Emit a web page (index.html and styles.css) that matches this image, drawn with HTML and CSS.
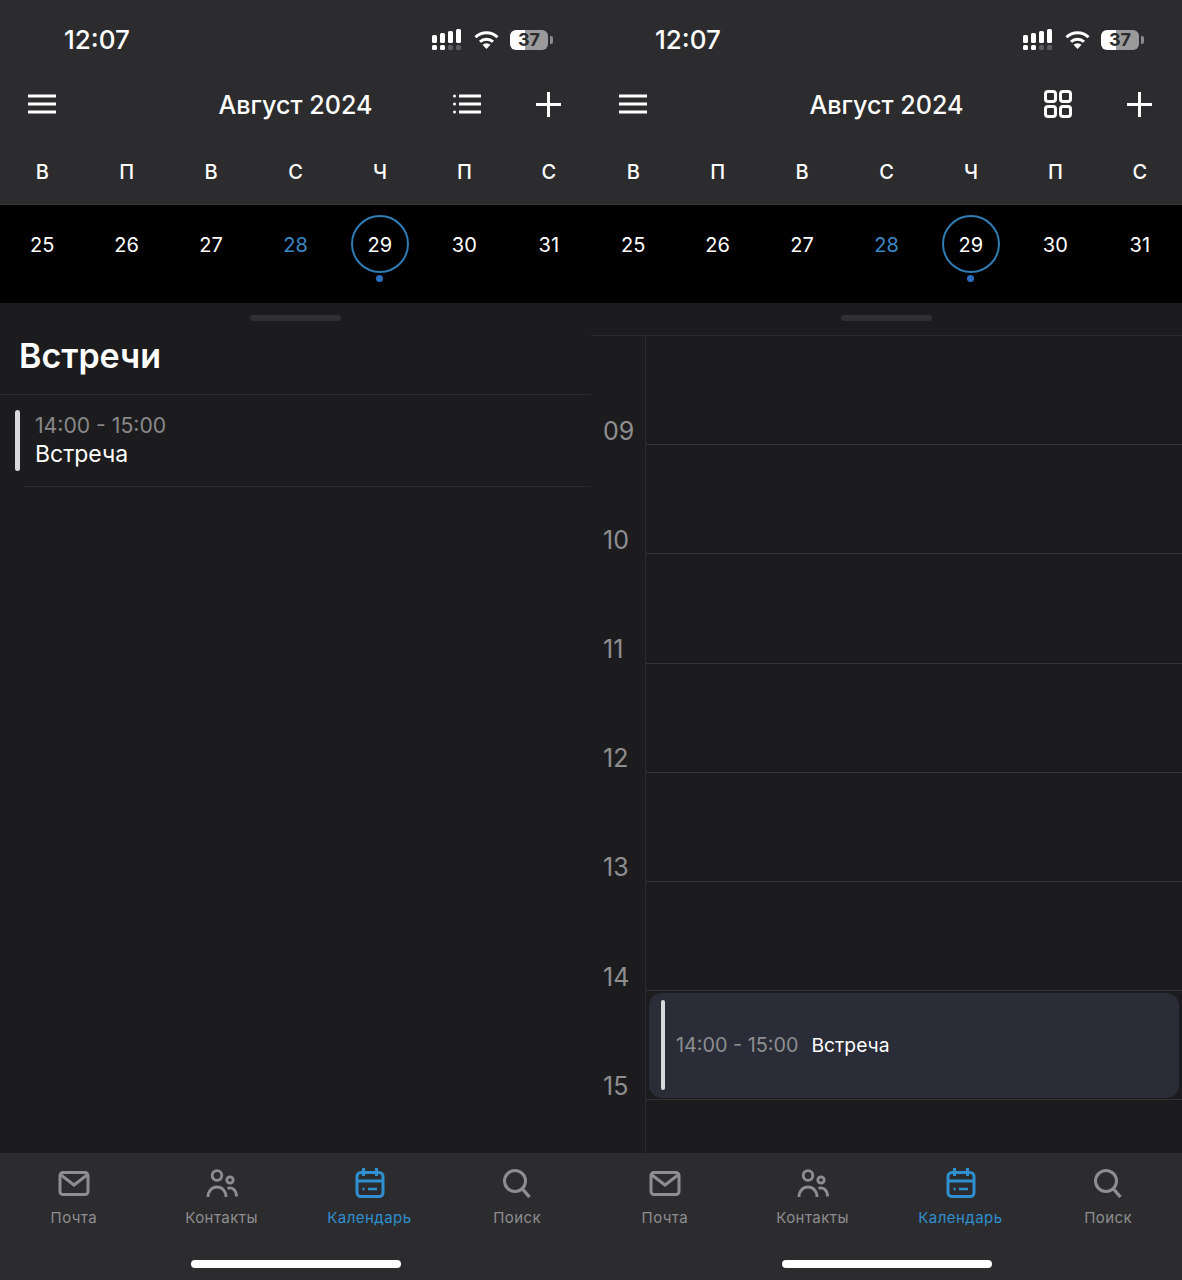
FILE: index.html
```html
<!DOCTYPE html>
<html lang="ru">
<head>
<meta charset="utf-8">
<title>Календарь</title>
<link rel="stylesheet" href="styles.css">
</head>
<body>
<div class="screens">

<section class="phone">
  <header class="top">
    <div class="status">
      <span class="clock">12:07</span>
      <div class="status-icons">
        <svg class="signal" width="31" height="21" viewBox="0 0 31 21"><g fill="#fff"><rect x="0" y="6" width="5" height="8" rx="1.5"/><rect x="8" y="4" width="5" height="10" rx="1.5"/><rect x="16" y="2" width="5" height="12" rx="1.5"/><rect x="24" y="0" width="5" height="14" rx="1.5"/><rect x="0" y="16" width="5" height="5" rx="1.5"/><rect x="8" y="16" width="5" height="5" rx="1.5"/></g><g fill="#5c5c5e"><rect x="16" y="16" width="5" height="5" rx="1.5"/><rect x="24" y="16" width="5" height="5" rx="1.5"/></g></svg>
        <svg class="wifi" width="25" height="19" viewBox="0 0 25 19"><g fill="none" stroke="#fff" stroke-width="3"><path d="M1.5 7.2a15.6 15.6 0 0 1 22 0"/><path d="M6 11.8a9.3 9.3 0 0 1 13 0"/></g><path d="M12.5 19l-4-4.2a5.7 5.7 0 0 1 8 0z" fill="#fff"/></svg>
        <div class="battery"><span class="battery-level">37</span><i class="battery-nub"></i></div>
      </div>
    </div>
    <nav class="nav">
      <svg class="icon-menu" width="28" height="20" viewBox="0 0 28 20"><path d="M0 2h28M0 10h28M0 18h28" stroke="#fff" stroke-width="3"/></svg>
      <h1 class="month">Август 2024</h1>
      <svg class="icon-view" width="28" height="20" viewBox="0 0 28 20"><g fill="#fff"><circle cx="1.5" cy="2" r="1.5"/><circle cx="1.5" cy="10" r="1.5"/><circle cx="1.5" cy="18" r="1.5"/></g><path d="M6 2h22M6 10h22M6 18h22" stroke="#fff" stroke-width="3"/></svg>
      <svg class="icon-plus" width="25" height="25" viewBox="0 0 25 25"><path d="M12.5 0v25M0 12.5h25" stroke="#fff" stroke-width="3"/></svg>
    </nav>
    <div class="weekdays"><span>В</span><span>П</span><span>В</span><span>С</span><span>Ч</span><span>П</span><span>С</span></div>
  </header>
  <div class="dates">
    <span class="date">25</span><span class="date">26</span><span class="date">27</span><span class="date date-today">28</span><span class="date date-selected">29</span><span class="date">30</span><span class="date">31</span>
  </div>
  <main class="sheet">
    <div class="handle"></div>
    <h2 class="list-title">Встречи</h2>
    <article class="list-event">
      <i class="event-bar"></i>
      <div class="list-event-text">
        <div class="list-event-time">14:00 - 15:00</div>
        <div class="list-event-name">Встреча</div>
      </div>
    </article>
  </main>
  <footer class="tabbar">
    <div class="tabs">
      <div class="tab"><svg width="32" height="30" viewBox="0 0 32 30"><rect x="2" y="4.500" width="28" height="22" rx="3" fill="none" stroke="currentColor" stroke-width="3"/><path d="M3 7l13 10L29 7" fill="none" stroke="currentColor" stroke-width="3"/></svg><span>Почта</span></div>
      <div class="tab"><svg width="32" height="30" viewBox="0 0 32 30"><g fill="none" stroke="currentColor" stroke-width="2.800"><circle cx="11" cy="7.500" r="4.800"/><circle cx="24" cy="12" r="3.200"/><path d="M2 29c0-6 4-10 9-10s9 4 9 10"/><path d="M21.500 20.500c4-2 9 1 9 8"/></g></svg><span>Контакты</span></div>
      <div class="tab tab-active"><svg width="32" height="30" viewBox="0 0 32 30"><rect x="4" y="4.500" width="26" height="24" rx="4" fill="none" stroke="currentColor" stroke-width="3"/><path d="M10.500 0v8M23.500 0v8M4 13h26" fill="none" stroke="currentColor" stroke-width="3"/><path d="M9.500 21h2M15 21h9" fill="none" stroke="currentColor" stroke-width="2.500"/></svg><span>Календарь</span></div>
      <div class="tab"><svg width="32" height="30" viewBox="0 0 32 30"><circle cx="14" cy="13" r="10.500" fill="none" stroke="currentColor" stroke-width="3"/><path d="M21.500 21l7 8" fill="none" stroke="currentColor" stroke-width="3.400"/></svg><span>Поиск</span></div>
    </div>
    <div class="home-bar"></div>
  </footer>
</section>

<section class="phone">
  <header class="top">
    <div class="status">
      <span class="clock">12:07</span>
      <div class="status-icons">
        <svg class="signal" width="31" height="21" viewBox="0 0 31 21"><g fill="#fff"><rect x="0" y="6" width="5" height="8" rx="1.5"/><rect x="8" y="4" width="5" height="10" rx="1.5"/><rect x="16" y="2" width="5" height="12" rx="1.5"/><rect x="24" y="0" width="5" height="14" rx="1.5"/><rect x="0" y="16" width="5" height="5" rx="1.5"/><rect x="8" y="16" width="5" height="5" rx="1.5"/></g><g fill="#5c5c5e"><rect x="16" y="16" width="5" height="5" rx="1.5"/><rect x="24" y="16" width="5" height="5" rx="1.5"/></g></svg>
        <svg class="wifi" width="25" height="19" viewBox="0 0 25 19"><g fill="none" stroke="#fff" stroke-width="3"><path d="M1.5 7.2a15.6 15.6 0 0 1 22 0"/><path d="M6 11.8a9.3 9.3 0 0 1 13 0"/></g><path d="M12.5 19l-4-4.2a5.7 5.7 0 0 1 8 0z" fill="#fff"/></svg>
        <div class="battery"><span class="battery-level">37</span><i class="battery-nub"></i></div>
      </div>
    </div>
    <nav class="nav">
      <svg class="icon-menu" width="28" height="20" viewBox="0 0 28 20"><path d="M0 2h28M0 10h28M0 18h28" stroke="#fff" stroke-width="3"/></svg>
      <h1 class="month">Август 2024</h1>
      <svg class="icon-view" width="28" height="28" viewBox="0 0 28 28"><g fill="none" stroke="#fff" stroke-width="3"><rect x="1.500" y="1.500" width="10" height="10" rx="2.500"/><rect x="16.500" y="1.500" width="10" height="10" rx="2.500"/><rect x="1.500" y="16.500" width="10" height="10" rx="2.500"/><rect x="16.500" y="16.500" width="10" height="10" rx="2.500"/></g></svg>
      <svg class="icon-plus" width="25" height="25" viewBox="0 0 25 25"><path d="M12.5 0v25M0 12.5h25" stroke="#fff" stroke-width="3"/></svg>
    </nav>
    <div class="weekdays"><span>В</span><span>П</span><span>В</span><span>С</span><span>Ч</span><span>П</span><span>С</span></div>
  </header>
  <div class="dates">
    <span class="date">25</span><span class="date">26</span><span class="date">27</span><span class="date date-today">28</span><span class="date date-selected">29</span><span class="date">30</span><span class="date">31</span>
  </div>
  <main class="sheet">
    <div class="handle"></div>
    <div class="hours">
      <div class="hour"><span class="hour-label">09</span><div class="slot"></div></div>
      <div class="hour"><span class="hour-label">10</span><div class="slot"></div></div>
      <div class="hour"><span class="hour-label">11</span><div class="slot"></div></div>
      <div class="hour"><span class="hour-label">12</span><div class="slot"></div></div>
      <div class="hour"><span class="hour-label">13</span><div class="slot"></div></div>
      <div class="hour"><span class="hour-label">14</span><div class="slot"></div></div>
      <div class="hour"><span class="hour-label">15</span>
        <div class="slot slot-busy">
          <article class="day-event">
            <i class="event-bar day-event-bar"></i>
            <span class="day-event-time">14:00 - 15:00</span>
            <span class="day-event-name">Встреча</span>
          </article>
        </div>
      </div>
      <div class="hour hour-rest"><span class="hour-label"></span></div>
    </div>
  </main>
  <footer class="tabbar">
    <div class="tabs">
      <div class="tab"><svg width="32" height="30" viewBox="0 0 32 30"><rect x="2" y="4.500" width="28" height="22" rx="3" fill="none" stroke="currentColor" stroke-width="3"/><path d="M3 7l13 10L29 7" fill="none" stroke="currentColor" stroke-width="3"/></svg><span>Почта</span></div>
      <div class="tab"><svg width="32" height="30" viewBox="0 0 32 30"><g fill="none" stroke="currentColor" stroke-width="2.800"><circle cx="11" cy="7.500" r="4.800"/><circle cx="24" cy="12" r="3.200"/><path d="M2 29c0-6 4-10 9-10s9 4 9 10"/><path d="M21.500 20.500c4-2 9 1 9 8"/></g></svg><span>Контакты</span></div>
      <div class="tab tab-active"><svg width="32" height="30" viewBox="0 0 32 30"><rect x="4" y="4.500" width="26" height="24" rx="4" fill="none" stroke="currentColor" stroke-width="3"/><path d="M10.500 0v8M23.500 0v8M4 13h26" fill="none" stroke="currentColor" stroke-width="3"/><path d="M9.500 21h2M15 21h9" fill="none" stroke="currentColor" stroke-width="2.500"/></svg><span>Календарь</span></div>
      <div class="tab"><svg width="32" height="30" viewBox="0 0 32 30"><circle cx="14" cy="13" r="10.500" fill="none" stroke="currentColor" stroke-width="3"/><path d="M21.500 21l7 8" fill="none" stroke="currentColor" stroke-width="3.400"/></svg><span>Поиск</span></div>
    </div>
    <div class="home-bar"></div>
  </footer>
</section>

</div>
</body>
</html>
```
FILE: styles.css
```css
* { box-sizing: border-box; }
html, body { margin: 0; padding: 0; background: #1c1c1e; }
body { font-family: Inter, "Noto Sans", sans-serif; color: #fff; overflow: hidden; }
h1, h2 { margin: 0; }
i { display: block; }

.screens { display: grid; grid-template-columns: 591px 591px; width: 1182px; height: 1280px; }
.phone { display: flex; flex-direction: column; height: 1280px; min-width: 0; }

.top { height: 205px; background: #2c2c2e; border-bottom: 1px solid #363638; flex: none; }

.status { height: 72px; padding: 7px 43px 0 64px; display: flex; align-items: center; justify-content: space-between; }
.clock { font-size: 26px; font-weight: 500; line-height: 32px; }
.status-icons { display: flex; align-items: center; gap: 11px; }
.signal, .wifi { display: block; flex: none; }
.battery {
  position: relative; width: 38px; height: 20px; border-radius: 6px;
  background: linear-gradient(90deg, #fff 0 39%, #9a9a9a 39% 100%);
  display: flex; align-items: center; justify-content: center;
  color: #2c2c2e; font-size: 18px; font-weight: 700; line-height: 20px;
}
.battery-nub { position: absolute; left: 40px; top: 6px; width: 2.500px; height: 8px; border-radius: 0 2px 2px 0; background: #8c8c8c; }

.nav { height: 64px; display: grid; grid-template-columns: repeat(7, 1fr); align-items: center; justify-items: center; }
.nav svg { display: block; }
.icon-menu { grid-column: 1; }
.month { grid-column: 3 / 6; font-size: 25.100px; font-weight: 500; line-height: 32px; white-space: nowrap; padding-top: 2px; }
.icon-view { grid-column: 6; margin-left: 6px; }
.icon-plus { grid-column: 7; }

.weekdays { display: grid; grid-template-columns: repeat(7, 1fr); text-align: center; font-size: 20px; font-weight: 500; line-height: 24px; padding-top: 24px; }

.dates { height: 98px; background: #000; display: grid; grid-template-columns: repeat(7, 1fr); align-items: start; justify-items: center; flex: none; padding-top: 10px; }
.date { position: relative; width: 58px; height: 58px; display: flex; align-items: center; justify-content: center; font-size: 20px; padding-top: 2px; }
.date-today { color: #3a87c4; }
.date-selected { border: 2px solid #2f7cb3; border-radius: 50%; }
.date-selected::after { content: ""; position: absolute; left: 50%; top: 58px; width: 7px; height: 7px; margin-left: -3.500px; border-radius: 50%; background: #2a6fc0; }

.sheet { flex: 1; min-height: 0; background: #1c1c1e; display: flex; flex-direction: column; }
.handle { width: 91px; height: 6px; border-radius: 3px; background: #303032; margin: 12px auto 0; flex: none; }

.list-title { height: 74px; padding: 0 19px; font-size: 34px; font-weight: 600; line-height: 70px; border-bottom: 1px solid #2b2b2d; flex: none; }
.list-event { display: flex; gap: 15px; padding: 15px 0 0 15px; }
.event-bar { width: 5px; background: #d9d9db; border-radius: 3px; flex: none; }
.list-event .event-bar { height: 61px; }
.list-event-text { flex: 1; padding-bottom: 17px; border-bottom: 1px solid #2b2b2d; margin-left: -11px; padding-left: 11px; }
.list-event-time { font-size: 21.200px; line-height: 30px; color: #88888a; }
.list-event-name { font-size: 23px; line-height: 28px; padding-bottom: 1px; }

.hours { margin-top: 14px; flex: 1; min-height: 0; overflow: hidden; border-top: 1px solid #2b2b2d; display: flex; flex-direction: column; }
.hour { height: 109.200px; display: grid; grid-template-columns: 55px 1fr; flex: none; }
.hour-rest { flex: 1; height: auto; }
.hour-label { display: flex; align-items: flex-end; padding: 0 0 0.500px 12px; font-size: 25px; line-height: 28px; color: #8e8e90; border-right: 1px solid #2b2b2d; }
.slot { border-bottom: 1px solid #333335; }
.slot-busy { display: flex; padding: 2px 3px 1px; }

.day-event { flex: 1; display: flex; align-items: center; padding: 0 12px; background: #2a2d37; border-radius: 13px; }
.day-event-bar { align-self: stretch; margin: 7px 0 8px; width: 4px; }
.day-event-time { margin: 0 0 1px 11px; font-size: 19.800px; color: #8e8e90; }
.day-event-name { margin: 0 0 1px 13px; font-size: 19.300px; }

.tabbar { height: 127px; background: #2c2c2e; flex: none; display: flex; flex-direction: column; }
.tabs { display: grid; grid-template-columns: repeat(4, 1fr); padding-top: 15px; }
.tab { display: flex; flex-direction: column; align-items: center; color: #8e8e90; font-size: 15px; line-height: 20px; letter-spacing: 0.45px; }
.tab svg { display: block; margin-bottom: 10px; }
.tab-active { color: #2f8fcf; }
.home-bar { width: 210px; height: 8px; border-radius: 4px; background: #fff; margin: 32px auto 0; }
```
